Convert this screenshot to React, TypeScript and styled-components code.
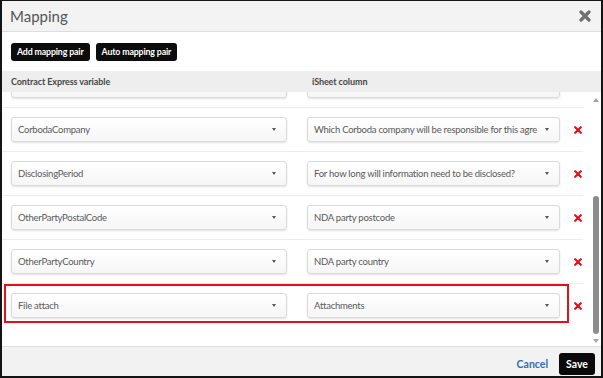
import React, { useLayoutEffect, useRef } from "react";
import styled, { createGlobalStyle } from "styled-components";

const GlobalStyle = createGlobalStyle`
  html, body {
    margin: 0;
    padding: 0;
    background: #ffffff;
  }
  * {
    box-sizing: border-box;
  }
`;

interface Pair {
  variable: string;
  column: string;
  highlighted?: boolean;
}

const pairs: Pair[] = [
  { variable: "DisclosingParty", column: "Disclosing party name" },
  { variable: "EffectiveDate", column: "Effective date" },
  { variable: "OtherPartyName", column: "NDA party name" },
  { variable: "OtherPartyAddress", column: "NDA party address" },
  {
    variable: "CorbodaCompany",
    column: "Which Corboda company will be responsible for this agreement?",
  },
  {
    variable: "DisclosingPeriod",
    column: "For how long will information need to be disclosed?",
  },
  { variable: "OtherPartyPostalCode", column: "NDA party postcode" },
  { variable: "OtherPartyCountry", column: "NDA party country" },
  { variable: "File attach", column: "Attachments", highlighted: true },
];

const CloseIcon = () => (
  <svg width="12" height="12" viewBox="0 0 12 12">
    <path
      d="M2 2 L10 10 M10 2 L2 10"
      stroke="#6f6f6f"
      strokeWidth="3.2"
      strokeLinecap="round"
    />
  </svg>
);

const DeleteIcon = () => (
  <svg width="8" height="8" viewBox="0 0 8 8">
    <path
      d="M1.2 1.2 L6.8 6.8 M6.8 1.2 L1.2 6.8"
      stroke="#e0141e"
      strokeWidth="2.2"
      strokeLinecap="round"
    />
  </svg>
);

const App: React.FC = () => {
  const viewportRef = useRef<HTMLDivElement>(null);

  useLayoutEffect(() => {
    const el = viewportRef.current;
    if (el) {
      el.scrollTop = el.scrollHeight;
    }
  }, []);

  return (
    <>
      <GlobalStyle />
      <Dialog>
        <Header>
          <Title>Mapping</Title>
          <CloseButton aria-label="Close">
            <CloseIcon />
          </CloseButton>
        </Header>
        <Toolbar>
          <DarkButton>Add mapping pair</DarkButton>
          <DarkButton>Auto mapping pair</DarkButton>
        </Toolbar>
        <ColumnHeader>
          <ColumnLabel>Contract Express variable</ColumnLabel>
          <ColumnLabel $indent>iSheet column</ColumnLabel>
        </ColumnHeader>
        <ListArea>
          <Viewport ref={viewportRef}>
            <RowList>
              {pairs.map((pair) => (
                <Row key={pair.variable}>
                  <PairBox $highlighted={pair.highlighted}>
                    <Select $width={276}>
                      <SelectText>{pair.variable}</SelectText>
                      <Caret />
                    </Select>
                    <Select $width={253}>
                      <SelectText>{pair.column}</SelectText>
                      <Caret />
                    </Select>
                  </PairBox>
                  <DeleteButton aria-label="Remove pair">
                    <DeleteIcon />
                  </DeleteButton>
                </Row>
              ))}
            </RowList>
          </Viewport>
          <ScrollTrack>
            <ScrollArrow $up />
            <TrackSpace />
            <ScrollThumb />
            <ScrollArrow />
          </ScrollTrack>
        </ListArea>
        <Footer>
          <LinkButton>Cancel</LinkButton>
          <SaveButton>Save</SaveButton>
        </Footer>
      </Dialog>
    </>
  );
};

export default App;

const Dialog = styled.div`
  width: 603px;
  height: 378px;
  display: flex;
  flex-direction: column;
  border: 2px solid #141414;
  border-top-width: 1px;
  background: #ffffff;
  font-family: Lato, "Open Sans", sans-serif;
  overflow: hidden;
`;

const Header = styled.div`
  height: 31px;
  flex: none;
  display: flex;
  align-items: center;
  justify-content: space-between;
  padding: 0 10px 0 8px;
  background: #f3f3f3;
  border-bottom: 1px solid #dcdcdc;
`;

const Title = styled.div`
  font-size: 15px;
  color: #555555;
`;

const CloseButton = styled.button`
  border: none;
  background: none;
  padding: 0;
  display: flex;
  cursor: pointer;
`;

const Toolbar = styled.div`
  height: 39px;
  flex: none;
  display: flex;
  align-items: center;
  gap: 6px;
  padding: 0 9px;
`;

const DarkButton = styled.button`
  height: 18px;
  padding: 0 6px;
  border: none;
  border-radius: 3px;
  background: #0c0c0c;
  color: #ffffff;
  font-family: Lato, sans-serif;
  font-weight: 700;
  font-size: 8.8px;
  letter-spacing: -0.15px;
  cursor: pointer;
`;

const ColumnHeader = styled.div`
  height: 21px;
  flex: none;
  display: grid;
  grid-template-columns: 296px 1fr;
  align-items: center;
  padding-left: 9px;
  background: #eeeeee;
`;

const ColumnLabel = styled.div<{ $indent?: boolean }>`
  font-size: 9px;
  font-weight: 700;
  letter-spacing: -0.1px;
  color: #474747;
  padding-left: ${({ $indent }) => ($indent ? "5px" : "0")};
`;

const ListArea = styled.div`
  flex: 1;
  min-height: 0;
  display: flex;
`;

const Viewport = styled.div`
  flex: 1;
  overflow: hidden;
`;

const RowList = styled.div`
  width: 581px;
  padding-bottom: 19px;
`;

const Row = styled.div`
  display: flex;
  align-items: center;
  padding: 9px 0 9px 9px;
  border-bottom: 1px solid #ececec;

  &:last-child {
    border-bottom: none;
  }
`;

const PairBox = styled.div<{ $highlighted?: boolean }>`
  position: relative;
  display: flex;
  gap: 20px;

  &::after {
    content: "";
    display: ${({ $highlighted }) => ($highlighted ? "block" : "none")};
    position: absolute;
    top: -9px;
    bottom: -5px;
    left: -7px;
    right: -9px;
    border: 2px solid #e3101b;
    pointer-events: none;
  }
`;

const Select = styled.div<{ $width: number }>`
  width: ${({ $width }) => $width}px;
  height: 25px;
  display: flex;
  align-items: center;
  padding: 0 10px 0 6px;
  background: linear-gradient(#ffffff, #f6f6f6);
  border: 1px solid #dadada;
  border-radius: 3px;
  box-shadow: 0 1px 2px rgba(0, 0, 0, 0.12);
`;

const SelectText = styled.span`
  flex: 1;
  overflow: hidden;
  white-space: nowrap;
  font-size: 9.5px;
  letter-spacing: -0.25px;
  color: #595959;
`;

const Caret = styled.span`
  flex: none;
  margin-left: 8px;
  width: 0;
  height: 0;
  border-left: 2.5px solid transparent;
  border-right: 2.5px solid transparent;
  border-top: 3px solid #555555;
`;

const DeleteButton = styled.button`
  border: none;
  background: none;
  padding: 0;
  margin-left: 14px;
  display: flex;
  cursor: pointer;
`;

const ScrollTrack = styled.div`
  width: 12px;
  flex: none;
  display: flex;
  flex-direction: column;
  align-items: center;
  padding: 4px 0 1px 2px;
`;

const ScrollArrow = styled.span<{ $up?: boolean }>`
  width: 0;
  height: 0;
  margin: 2px 0;
  border-left: 3px solid transparent;
  border-right: 3px solid transparent;
  ${({ $up }) =>
    $up ? "border-bottom: 4px solid #a3a3a3;" : "border-top: 4px solid #a3a3a3;"}
`;

const TrackSpace = styled.div`
  flex: 1;
`;

const ScrollThumb = styled.div`
  width: 6px;
  height: 138px;
  border-radius: 3px;
  background: #8c8c8c;
  margin-bottom: 3px;
`;

const Footer = styled.div`
  height: 30px;
  flex: none;
  display: flex;
  align-items: center;
  justify-content: flex-end;
  padding: 5px 6px 0 0;
  background: #f2f2f2;
  border-top: 1px solid #dcdcdc;
`;

const LinkButton = styled.button`
  border: none;
  background: none;
  padding: 0;
  margin-right: 11px;
  font-family: Lato, sans-serif;
  font-weight: 700;
  font-size: 10.5px;
  color: #2c6fb6;
  cursor: pointer;
`;

const SaveButton = styled.button`
  height: 22px;
  width: 36px;
  border: none;
  border-radius: 3px;
  background: #0a0a0a;
  color: #ffffff;
  font-family: Lato, sans-serif;
  font-weight: 700;
  font-size: 10.5px;
  cursor: pointer;
`;
